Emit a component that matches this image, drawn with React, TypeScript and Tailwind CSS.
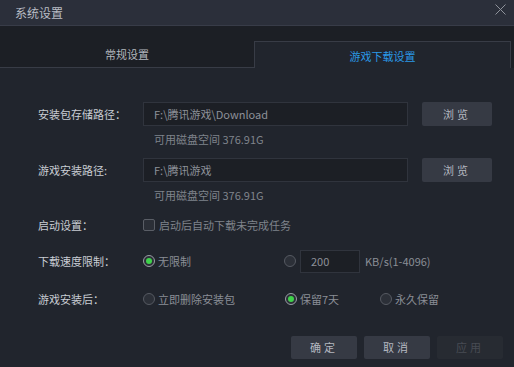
import React from "react";

const font = { fontFamily: '"Noto Sans CJK SC", "Noto Sans", sans-serif' };

function Radio({ checked }: { checked?: boolean }) {
  return (
    <span
      className={
        "flex h-[12px] w-[12px] shrink-0 items-center justify-center rounded-full border " +
        (checked ? "border-[#9a9ea6] bg-[#2c3038]" : "border-[#565a62] bg-[#2c3038]")
      }
    >
      {checked && <span className="h-[6px] w-[6px] rounded-full bg-[#3fd24b]" />}
    </span>
  );
}

function Label({ children }: { children: React.ReactNode }) {
  return <div className="w-[105px] shrink-0 text-[11px] leading-[16px] text-[#c9cdd4]">{children}</div>;
}

function Btn({ children, disabled }: { children: React.ReactNode; disabled?: boolean }) {
  return (
    <div
      className={
        "flex h-[23px] w-[66px] items-center justify-center rounded-[2px] text-[11px] tracking-[3px] " +
        (disabled ? "bg-[#272b32] text-[#484c54]" : "bg-[#363a44] text-[#b4b8c0]")
      }
    >
      {children}
    </div>
  );
}

export default function App() {
  return (
    <div className="h-[367px] w-[514px] overflow-hidden bg-[#21252d]" style={font}>
      {/* title bar */}
      <div className="flex h-[26px] items-center justify-between border-b border-[#383c48] bg-[#2b2f3a] pl-[15px] pr-[8px]">
        <span className="text-[12px] leading-[16px] text-[#b9bdc5]">系统设置</span>
        <svg width="11" height="11" viewBox="0 0 11 11" className="mb-[6px]">
          <path d="M0.5 0.5 L10.5 10.5 M10.5 0.5 L0.5 10.5" stroke="#8f939b" strokeWidth="1" />
        </svg>
      </div>
      {/* tabs */}
      <div className="flex h-[42px] items-end bg-[#1c1f25]">
        <div className="flex h-[27px] w-[254px] items-center justify-center border-b border-[#383c46] text-[11px] text-[#b3b7be]">
          常规设置
        </div>
        <div className="flex h-[27px] w-[257px] items-center justify-center border-l border-r border-t border-[#383c46] bg-[#21252d] pt-[2px] text-[11px] text-[#2a98e6]">
          游戏下载设置
        </div>
      </div>
      {/* content */}
      <div className="pl-[38px]">
        <div className="mt-[34px] flex h-[24px] items-center">
          <Label>安装包存储路径：</Label>
          <div className="flex h-[24px] w-[265px] items-center border border-[#30343d] bg-[#1c1f25] pl-[10px] text-[11px] text-[#8d9199]">
            F:\腾讯游戏\Download
          </div>
          <div className="ml-[14px] flex h-[24px] w-[70px] items-center justify-center rounded-[2px] bg-[#363a44] text-[11px] tracking-[3px] text-[#b4b8c0]">
            浏览
          </div>
        </div>
        <div className="mt-[5px] pl-[116px] text-[11px] leading-[16px] text-[#7f838b]">可用磁盘空间 376.91G</div>

        <div className="mt-[11px] flex h-[24px] items-center">
          <Label>游戏安装路径:</Label>
          <div className="flex h-[24px] w-[265px] items-center border border-[#30343d] bg-[#1c1f25] pl-[10px] text-[11px] text-[#8d9199]">
            F:\腾讯游戏
          </div>
          <div className="ml-[14px] flex h-[24px] w-[70px] items-center justify-center rounded-[2px] bg-[#363a44] text-[11px] tracking-[3px] text-[#b4b8c0]">
            浏览
          </div>
        </div>
        <div className="mt-[5px] pl-[116px] text-[11px] leading-[16px] text-[#7f838b]">可用磁盘空间 376.91G</div>

        <div className="mt-[12px] flex h-[20px] items-center">
          <Label>启动设置：</Label>
          <span className="h-[12px] w-[12px] shrink-0 rounded-[2px] border border-[#5a5e66] bg-[#2b2f37]" />
          <span className="ml-[4px] text-[11px] leading-[16px] text-[#7f838b]">启动后自动下载未完成任务</span>
        </div>

        <div className="mt-[14px] flex h-[24px] items-center">
          <Label>下载速度限制：</Label>
          <div className="flex w-[141px] items-center">
            <Radio checked />
            <span className="ml-[3px] text-[11px] leading-[16px] text-[#8a8e96]">无限制</span>
          </div>
          <Radio />
          <div className="ml-[4px] flex h-[23px] w-[60px] items-center border border-[#30343d] bg-[#1c1f25] pl-[10px] text-[11px] text-[#8d9199]">
            200
          </div>
          <span className="ml-[5px] text-[11px] leading-[16px] text-[#8a8e96]">KB/s(1-4096)</span>
        </div>

        <div className="mt-[16px] flex h-[20px] items-center">
          <Label>游戏安装后：</Label>
          <div className="flex w-[142px] items-center">
            <Radio />
            <span className="ml-[3px] text-[11px] leading-[16px] text-[#8a8e96]">立即删除安装包</span>
          </div>
          <div className="flex w-[95px] items-center">
            <Radio checked />
            <span className="ml-[3px] text-[11px] leading-[16px] text-[#8a8e96]">保留7天</span>
          </div>
          <div className="flex items-center">
            <Radio />
            <span className="ml-[3px] text-[11px] leading-[16px] text-[#8a8e96]">永久保留</span>
          </div>
        </div>
      </div>

      <div className="mt-[27px] flex justify-end gap-[7px] pr-[11px]">
        <Btn>确定</Btn>
        <Btn>取消</Btn>
        <Btn disabled>应用</Btn>
      </div>
    </div>
  );
}
